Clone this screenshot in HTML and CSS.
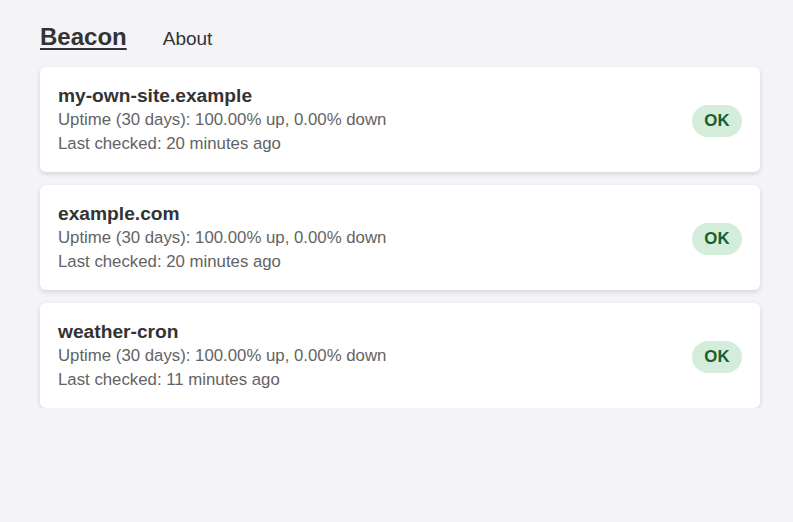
FILE: index.html
```html
<!DOCTYPE html>
<html lang="en">
<head>
<meta charset="utf-8">
<title>Beacon</title>
<link rel="stylesheet" href="styles.css">
</head>
<body>
<header class="header">
  <a class="brand" href="#">Beacon</a>
  <a class="nav-link" href="#">About</a>
</header>
<main class="list">
  <div class="card">
    <div class="info">
      <div class="name">my-own-site.example</div>
      <div class="meta">Uptime (30 days): 100.00% up, 0.00% down</div>
      <div class="meta">Last checked: 20 minutes ago</div>
    </div>
    <span class="badge">OK</span>
  </div>
  <div class="card">
    <div class="info">
      <div class="name">example.com</div>
      <div class="meta">Uptime (30 days): 100.00% up, 0.00% down</div>
      <div class="meta">Last checked: 20 minutes ago</div>
    </div>
    <span class="badge">OK</span>
  </div>
  <div class="card">
    <div class="info">
      <div class="name">weather-cron</div>
      <div class="meta">Uptime (30 days): 100.00% up, 0.00% down</div>
      <div class="meta">Last checked: 11 minutes ago</div>
    </div>
    <span class="badge">OK</span>
  </div>
</main>
</body>
</html>
```

FILE: styles.css
```css
html, body {
  margin: 0;
  padding: 0;
}
body {
  background: #f4f3f8;
  font-family: "Liberation Sans", Arial, sans-serif;
  color: #333;
  padding: 0 33px 0 40px;
}
.header {
  display: flex;
  align-items: baseline;
  gap: 36px;
  padding: 19px 0 13px;
}
.brand {
  font-size: 24px;
  font-weight: bold;
  line-height: 35px;
  color: #333;
  text-decoration: underline;
  text-decoration-thickness: 2px;
  text-underline-offset: 3px;
}
.nav-link {
  font-size: 19px;
  color: #333;
  text-decoration: none;
}
.list {
  display: flex;
  flex-direction: column;
  gap: 13px;
}
.card {
  background: #fff;
  border-radius: 6px;
  box-shadow: 0 2px 5px rgba(0, 0, 0, 0.13);
  padding: 17px 18px 16px;
  display: flex;
  align-items: center;
  justify-content: space-between;
}
.name {
  font-size: 19.2px;
  font-weight: bold;
  line-height: 24px;
  color: #333;
}
.meta {
  font-size: 16.8px;
  line-height: 24px;
  color: #636363;
}
.badge {
  background: #d4edda;
  color: #1b5e2b;
  font-weight: bold;
  font-size: 16.8px;
  line-height: 32px;
  padding: 0 12.5px;
  border-radius: 16px;
  margin-top: 1px;
}
```
